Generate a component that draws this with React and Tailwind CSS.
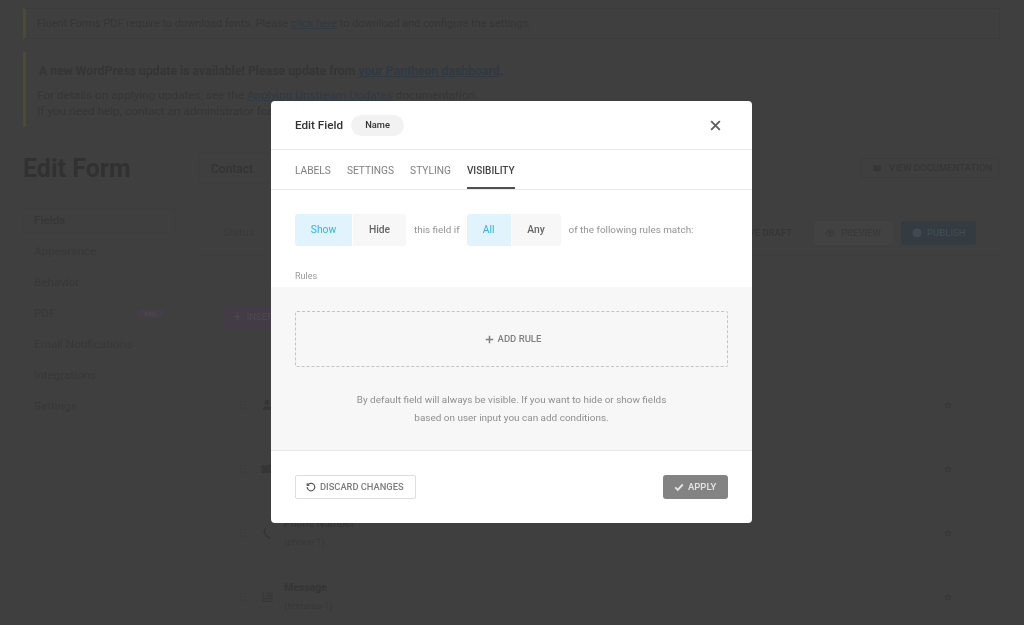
import React from "react";

const Gear = ({ className }) => (
  <svg viewBox="0 0 24 24" className={className} fill="currentColor">
    <path d="M19.400 13a7.500 7.500 0 0 0 0-2l2.100-1.600-2-3.400-2.500 1a7.500 7.500 0 0 0-1.700-1L15 3.300h-4l-.4 2.700a7.500 7.500 0 0 0-1.700 1l-2.500-1-2 3.400L6.500 11a7.500 7.500 0 0 0 0 2l-2.100 1.600 2 3.400 2.500-1a7.500 7.500 0 0 0 1.700 1l.4 2.700h4l.4-2.700a7.500 7.500 0 0 0 1.700-1l2.500 1 2-3.400zM13 15.500a3.500 3.500 0 1 1 0-7 3.500 3.500 0 0 1 0 7z" />
  </svg>
);

const FieldRow = ({ title, sub, icon }) => (
  <div className="flex h-16 shrink-0 items-center">
    <div className="ml-[42px] mr-[8px] grid w-[7px] grid-cols-2 gap-[1px] opacity-30">
      {[0, 1, 2, 3, 4, 5].map((i) => (
        <span key={i} className="h-[2px] w-[2px] bg-[#383838]" />
      ))}
    </div>
    <div className="flex w-[24px] justify-center text-[#363636]">{icon}</div>
    <div className="ml-[5px] flex-1">
      <div className="text-[10.500px] font-bold leading-[18px] text-[#353535]">{title}</div>
      <div className="text-[9.500px] leading-[18px] text-[#393939]">{sub}</div>
    </div>
    <Gear className="mr-[48px] h-[9px] w-[9px] text-[#393939]" />
  </div>
);

const Background = () => (
  <div className="flex h-[625px] flex-col overflow-hidden bg-[#3f3f3f] px-[23px] pt-2 text-[#363636] blur-[0.5px]">
    <div className="flex h-[31px] w-[977px] shrink-0 items-center border border-l-[3px] border-[#3c3c3c] border-l-[#4c4935] pl-[11px] pt-[2px] text-[10.900px]">
      Fluent Forms PDF require to download fonts. Please&nbsp;<span className="text-[#303a42] underline">click here</span>&nbsp;to download and configure the settings.
    </div>
    <div className="mt-[13px] h-[75px] w-[494px] shrink-0 border-l-[3px] border-[#4c4935] pl-[11px] pt-[9px] text-[11.800px]">
      <div className="whitespace-nowrap pl-[2px] text-[12.250px] font-bold leading-[20px] text-[#353535]">
        A new WordPress update is available! Please update from <span className="text-[#303a42] underline">your Pantheon dashboard</span>.
      </div>
      <div className="mt-[6px] leading-[16px]">
        For details on applying updates, see the <span className="text-[#303a42] underline">Applying Upstream Updates</span> documentation.
      </div>
      <div className="leading-[16px]">If you need help, contact an administrator for your organization.</div>
    </div>
    <div className="mt-[25px] flex h-[32px] shrink-0 items-center">
      <div className="w-[175px] pt-[2px] text-[25px] font-bold text-[#313131]">Edit Form</div>
      <div className="flex h-[32px] w-[90px] items-center rounded-[3px] border border-[#3d3d3d] pl-[12px] pt-[2px] text-[12px] font-medium text-[#333333]">Contact</div>
      <div className="ml-auto mr-[2px] flex h-[20px] w-[138px] items-center gap-[7px] rounded-[2px] border border-[#3c3c3c] pl-[10px] text-[9.500px] font-medium text-[#363636]">
        <svg viewBox="0 0 24 24" className="h-[10px] w-[10px]" fill="currentColor"><path d="M3 5c4-1 7 0 9 2 2-2 5-3 9-2v14c-4-1-7 0-9 2-2-2-5-3-9-2z" /></svg>
        VIEW DOCUMENTATION
      </div>
    </div>
    <div className="mt-[24px] flex shrink-0">
      <div className="w-[175px]">
        <div className="flex h-[25px] w-[152px] items-center rounded-[3px] border border-[#3d3d3d] pl-[10px] text-[11.700px] font-medium text-[#363636]">Fields</div>
        <div className="mt-[3px] flex flex-col pl-[11px] text-[11.700px] text-[#383838]">
          <div className="flex h-[31px] items-center">Appearance</div>
          <div className="flex h-[31px] items-center">Behavior</div>
          <div className="flex h-[31px] w-[130px] items-center justify-between">
            PDF
            <span className="rounded-full bg-[#443e47] px-[8px] text-[6px] leading-[9px] text-[#524d55]">PRO</span>
          </div>
          <div className="flex h-[31px] items-center">Email Notifications</div>
          <div className="flex h-[31px] items-center">Integrations</div>
          <div className="flex h-[31px] items-center">Settings</div>
        </div>
      </div>
      <div className="w-[802px]">
        <div className="flex h-[47px] items-center justify-between border-b border-[#3d3d3d]">
          <div className="pl-[25px] pt-[5px] text-[11px] text-[#3a3a3a]">Status</div>
          <div className="flex items-center pr-[24px] pt-[4px]">
            <span className="mr-[22px] text-[9.500px] font-medium text-[#363636]">SAVE DRAFT</span>
            <div className="flex h-[24px] w-[79px] items-center gap-[6px] rounded-[2px] bg-[#424242] pl-[11px] text-[9.500px] font-medium text-[#3a3a3a]">
              <svg viewBox="0 0 24 24" className="h-[10px] w-[10px]" fill="none" stroke="currentColor" strokeWidth="3"><path d="M2 12c3-5 6-7 10-7s7 2 10 7c-3 5-6 7-10 7s-7-2-10-7z" /><circle cx="12" cy="12" r="2" /></svg>
              PREVIEW
            </div>
            <div className="ml-[8px] flex h-[24px] w-[75px] items-center gap-[5px] rounded-[2px] bg-[#343c41] pl-[11px] text-[9.500px] font-medium text-[#414a50]">
              <svg viewBox="0 0 24 24" className="h-[10px] w-[10px]" fill="currentColor"><circle cx="12" cy="12" r="11" /></svg>
              PUBLISH
            </div>
          </div>
        </div>
        <div className="pl-[25px] pt-[50px]">
          <div className="flex h-[24px] w-[90px] items-center gap-[6px] rounded-[3px] bg-[#433c47] pl-[11px] text-[9.500px] font-medium text-[#4d4651]">
            <span className="text-[12px] leading-none">+</span> INSERT FIELD
          </div>
        </div>
        <div className="mt-[44px]">
          <FieldRow title="Name" sub="{name-1}" icon={<svg viewBox="0 0 24 24" className="h-[12px] w-[12px]" fill="currentColor"><circle cx="12" cy="7" r="5" /><path d="M3 22c0-6 4-8 9-8s9 2 9 8z" /></svg>} />
          <FieldRow title="Email" sub="{email-1}" icon={<svg viewBox="0 0 24 24" className="h-[12px] w-[12px]" fill="currentColor"><rect x="1" y="4" width="22" height="16" rx="2" /></svg>} />
          <FieldRow title="Phone Number" sub="{phone-1}" icon={<svg viewBox="0 0 24 24" className="h-[13px] w-[13px]" fill="none" stroke="currentColor" strokeWidth="3"><path d="M8 3c-4 6 0 15 9 18" /></svg>} />
          <FieldRow title="Message" sub="{textarea-1}" icon={<svg viewBox="0 0 24 24" className="h-[13px] w-[13px]" fill="none" stroke="currentColor" strokeWidth="2"><path d="M9 4h13M9 9h13M1 14h21M1 19h21M2 4h4M2 9h4" /></svg>} />
        </div>
      </div>
    </div>
  </div>
);

const Modal = () => (
  <div className="absolute left-[271px] top-[101px] flex h-[422px] w-[481px] flex-col overflow-hidden rounded-[4px] bg-white blur-[0.3px]">
    <div className="flex h-[49px] shrink-0 items-center border-b border-[#e8e8e8] pl-[24px] pr-[30px]">
      <span className="pt-[1px] text-[11.700px] font-medium text-[#333333]">Edit Field</span>
      <span className="ml-[8px] flex h-[21px] w-[53px] items-center justify-center rounded-full bg-[#f2f2f2] text-[9.300px] font-medium text-[#333333]">Name</span>
      <svg viewBox="0 0 24 24" className="ml-auto h-[13px] w-[13px] text-[#606060]" fill="none" stroke="currentColor" strokeWidth="3.500"><path d="M4 4l16 16M20 4L4 20" /></svg>
    </div>
    <div className="flex h-[40px] shrink-0 gap-[16px] border-b border-[#e8e8e8] pl-[24px] text-[10.200px]">
      <div className="flex items-center pt-[3px] text-[#7f7f7f]">LABELS</div>
      <div className="flex items-center pt-[3px] text-[#7f7f7f]">SETTINGS</div>
      <div className="flex items-center pt-[3px] text-[#7f7f7f]">STYLING</div>
      <div className="flex items-center border-b-[2px] border-[#505050] pt-[4px] text-[10px] font-medium text-[#444444]">VISIBILITY</div>
    </div>
    <div className="flex shrink-0 items-center pl-[24px] pt-[24px] text-[9.900px]">
      <div className="flex h-[32px] w-[57px] items-center justify-center rounded-l-[3px] bg-[#e1f4fe] text-[10.300px] text-[#2eb2f0]">Show</div>
      <div className="ml-[1px] flex h-[32px] w-[53px] items-center justify-center rounded-r-[3px] bg-[#f7f7f7] text-[10.300px] font-medium text-[#666666]">Hide</div>
      <span className="ml-[8px] text-[#939393]">this field if</span>
      <div className="ml-[7px] flex h-[32px] w-[44px] items-center justify-center rounded-l-[3px] bg-[#e1f4fe] text-[10.300px] text-[#2eb2f0]">All</div>
      <div className="ml-[1px] flex h-[32px] w-[49px] items-center justify-center rounded-r-[3px] bg-[#f7f7f7] text-[10.300px] font-medium text-[#666666]">Any</div>
      <span className="ml-[8px] text-[#939393]">of the following rules match:</span>
    </div>
    <div className="flex h-[41px] shrink-0 items-center pl-[24px] pt-[21px] text-[9px] text-[#999999]">Rules</div>
    <div className="flex h-[163px] shrink-0 flex-col bg-[#f7f7f7] px-[24px] pt-[24px]">
      <div className="flex h-[56px] items-center justify-center gap-[4px] rounded-[2px] border border-dashed border-[#c4c4c4] pl-[3px] text-[9.500px] font-medium text-[#808080]">
        <svg viewBox="0 0 24 24" className="h-[9px] w-[9px]" fill="none" stroke="currentColor" strokeWidth="4"><path d="M12 2v20M2 12h20" /></svg>
        ADD RULE
      </div>
      <div className="mt-[24px] text-center text-[9.950px] leading-[18px] text-[#8e8e8e]">
        By default field will always be visible. If you want to hide or show fields
        <br />
        based on user input you can add conditions.
      </div>
    </div>
    <div className="flex flex-1 items-center justify-between border-t border-[#e8e8e8] px-[24px]">
      <div className="flex h-[24px] w-[121px] items-center gap-[4px] rounded-[2px] border-[1.500px] border-[#dedede] pl-[10px] text-[9.300px] font-medium text-[#7c7c7c]">
        <svg viewBox="0 0 24 24" className="h-[10px] w-[10px] text-[#5c5c5c]" fill="none" stroke="currentColor" strokeWidth="3"><path d="M3 12a9 9 0 1 0 9-9 9.750 9.750 0 0 0-6.740 2.740L3 8" /><path d="M3 3v5h5" /></svg>
        DISCARD CHANGES
      </div>
      <div className="flex h-[24px] w-[65px] items-center gap-[4px] rounded-[3px] bg-[#838383] pl-[11px] text-[9.500px] font-medium text-[#e4e4e4]">
        <svg viewBox="0 0 24 24" className="h-[10px] w-[10px]" fill="none" stroke="currentColor" strokeWidth="4.500"><path d="M3 13l6 6L21 6" /></svg>
        APPLY
      </div>
    </div>
  </div>
);

export default function App() {
  return (
    <div className="relative h-[625px] w-[1024px] overflow-hidden font-['Roboto',sans-serif]">
      <Background />
      <Modal />
    </div>
  );
}
